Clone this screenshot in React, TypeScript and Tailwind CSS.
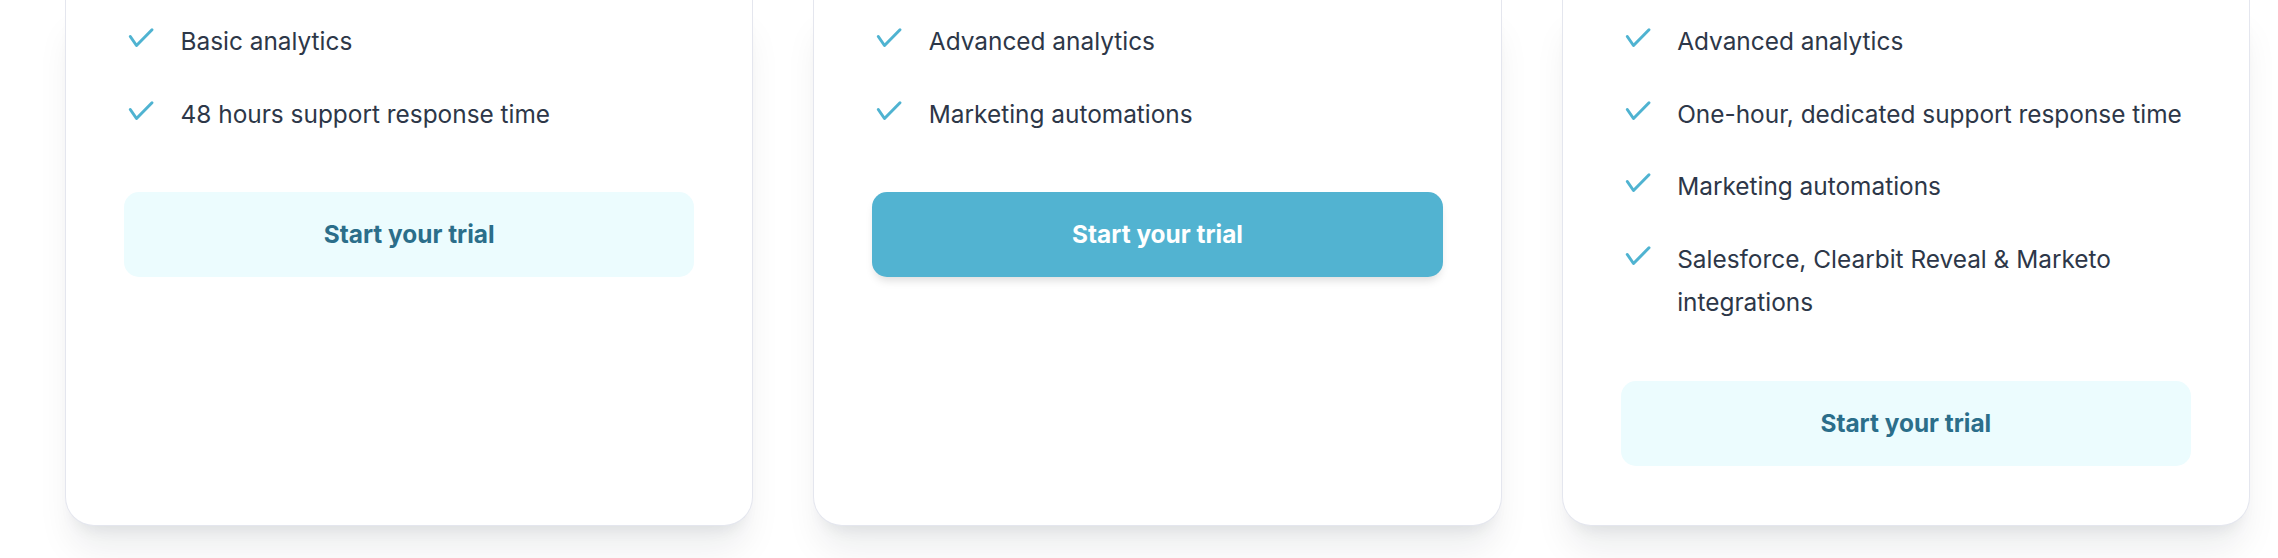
const plans = [
  {
    features: ["Basic analytics", "48 hours support response time"],
    featured: false,
  },
  {
    features: ["Advanced analytics", "Marketing automations"],
    featured: true,
  },
  {
    features: [
      "Advanced analytics",
      "One-hour, dedicated support response time",
      "Marketing automations",
      "Salesforce, Clearbit Reveal & Marketo integrations",
    ],
    featured: false,
  },
];

function Check() {
  return (
    <svg
      width="32"
      height="22"
      viewBox="0 0 32 22"
      fill="none"
      className="mt-[7px] shrink-0"
    >
      <polyline
        points="6.3,9.5 12.5,18.5 28,2.8"
        stroke="#4fb3d1"
        strokeWidth="3"
        strokeLinecap="round"
        strokeLinejoin="round"
      />
    </svg>
  );
}

function PlanCard({ features, featured }: { features: string[]; featured: boolean }) {
  return (
    <div className="flex flex-col rounded-b-[29px] border border-t-0 border-[#e4e6ee] bg-white px-[58px] pb-[59px] pt-[20px] shadow-[0_29px_36px_-7px_rgba(15,23,42,0.08),0_12px_15px_-9px_rgba(15,23,42,0.08)]">
      <ul className="flex flex-col gap-[29px]">
        {features.map((f) => (
          <li key={f} className="flex items-start">
            <Check />
            <span className="ml-[24.5px] text-[24.4px] leading-[43.6px] text-[#2d3748]">
              {f}
            </span>
          </li>
        ))}
      </ul>
      <button
        className={
          featured
            ? "mt-[56px] h-[85px] w-full rounded-[15px] bg-[#52b3d1] text-[24.4px] font-bold text-white shadow-[0_6px_10px_-3px_rgba(0,0,0,0.15)]"
            : "mt-[56px] h-[85px] w-full rounded-[15px] bg-[#ecfcfe] text-[24.4px] font-bold text-[#2b6e8a]"
        }
      >
        Start your trial
      </button>
    </div>
  );
}

export default function App() {
  return (
    <div
      className="h-[558px] w-full overflow-hidden bg-white"
      style={{ fontFamily: "Inter, 'Noto Sans', sans-serif" }}
    >
      <div className="grid grid-cols-3 gap-[60px] pl-[65px] pr-[28px]">
        {plans.map((p, i) => (
          <PlanCard key={i} features={p.features} featured={p.featured} />
        ))}
      </div>
    </div>
  );
}
